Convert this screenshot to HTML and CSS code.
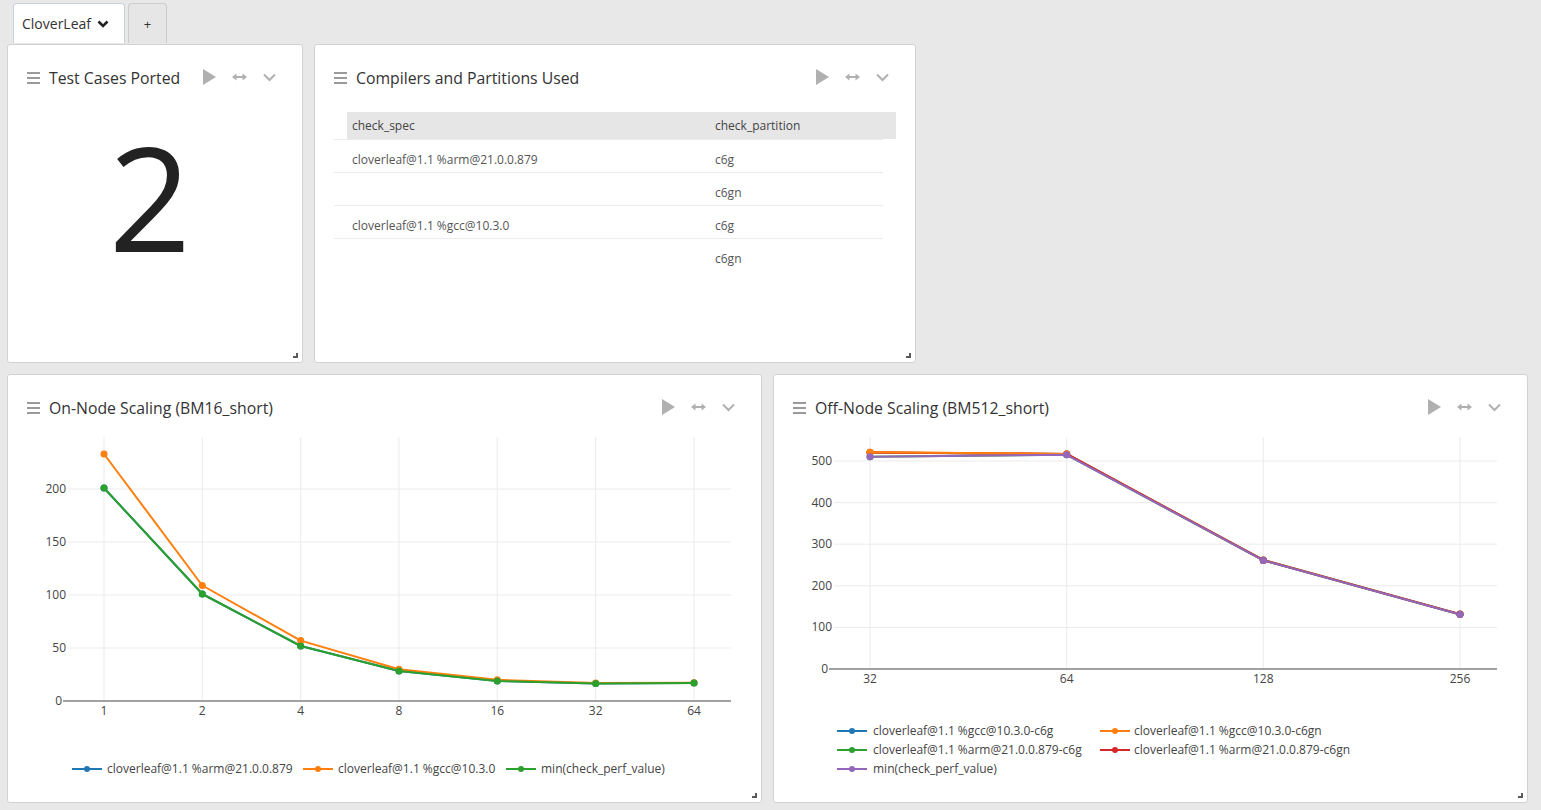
FILE: index.html
```html
<!DOCTYPE html>
<html lang="en">
<head>
<meta charset="utf-8">
<title>CloverLeaf</title>
<link rel="stylesheet" href="styles.css">
</head>
<body>
<nav class="tabs">
  <div class="tab tab-active">CloverLeaf
    <svg class="tab-chevron" width="12" height="8" viewBox="0 0 12 8"><polyline points="1.5,1.5 6,6 10.5,1.5" fill="none" stroke="#222" stroke-width="2.6"/></svg>
  </div>
  <div class="tab tab-add">+</div>
</nav>

<main class="board">
  <div class="row row-top">
    <section class="panel panel-count">
      <header class="panel-head">
        <svg class="menu-icon" width="13" height="12" viewBox="0 0 13 12"><rect y="0" width="13" height="2"/><rect y="5" width="13" height="2"/><rect y="10" width="13" height="2"/></svg>
        <h2 class="panel-title">Test Cases Ported</h2>
        <div class="panel-tools">
          <svg width="13" height="16" viewBox="0 0 13 16"><polygon points="0,0 13,8 0,16"/></svg>
          <svg width="15" height="8" viewBox="0 0 15 8"><polygon points="0,4 4.5,0.5 4.5,7.5"/><polygon points="15,4 10.5,0.5 10.5,7.5"/><rect x="3" y="3" width="9" height="2"/></svg>
          <svg width="13" height="9" viewBox="0 0 13 9"><polyline points="1,1.5 6.5,7 12,1.5" fill="none" stroke-width="2"/></svg>
        </div>
      </header>
      <div class="big-number">2</div>
    </section>

    <section class="panel panel-table">
      <header class="panel-head">
        <svg class="menu-icon" width="13" height="12" viewBox="0 0 13 12"><rect y="0" width="13" height="2"/><rect y="5" width="13" height="2"/><rect y="10" width="13" height="2"/></svg>
        <h2 class="panel-title">Compilers and Partitions Used</h2>
        <div class="panel-tools">
          <svg width="13" height="16" viewBox="0 0 13 16"><polygon points="0,0 13,8 0,16"/></svg>
          <svg width="15" height="8" viewBox="0 0 15 8"><polygon points="0,4 4.5,0.5 4.5,7.5"/><polygon points="15,4 10.5,0.5 10.5,7.5"/><rect x="3" y="3" width="9" height="2"/></svg>
          <svg width="13" height="9" viewBox="0 0 13 9"><polyline points="1,1.5 6.5,7 12,1.5" fill="none" stroke-width="2"/></svg>
        </div>
      </header>
      <div class="table">
        <div class="thead"><span>check_spec</span><span>check_partition</span></div>
        <div class="trow"><span>cloverleaf@1.1 %arm@21.0.0.879</span><span>c6g</span></div>
        <div class="trow"><span></span><span>c6gn</span></div>
        <div class="trow"><span>cloverleaf@1.1 %gcc@10.3.0</span><span>c6g</span></div>
        <div class="trow"><span></span><span>c6gn</span></div>
      </div>
    </section>
  </div>

  <div class="row row-bottom">
    <section class="panel panel-chart">
      <header class="panel-head">
        <svg class="menu-icon" width="13" height="12" viewBox="0 0 13 12"><rect y="0" width="13" height="2"/><rect y="5" width="13" height="2"/><rect y="10" width="13" height="2"/></svg>
        <h2 class="panel-title">On-Node Scaling (BM16_short)</h2>
        <div class="panel-tools">
          <svg width="13" height="16" viewBox="0 0 13 16"><polygon points="0,0 13,8 0,16"/></svg>
          <svg width="15" height="8" viewBox="0 0 15 8"><polygon points="0,4 4.5,0.5 4.5,7.5"/><polygon points="15,4 10.5,0.5 10.5,7.5"/><rect x="3" y="3" width="9" height="2"/></svg>
          <svg width="13" height="9" viewBox="0 0 13 9"><polyline points="1,1.5 6.5,7 12,1.5" fill="none" stroke-width="2"/></svg>
        </div>
      </header>
      <svg class="chart" width="753" height="371" viewBox="0 0 753 371">
        <g class="gridlines">
          <line x1="96" y1="7" x2="96" y2="271"/>
          <line x1="194.3" y1="7" x2="194.3" y2="271"/>
          <line x1="292.7" y1="7" x2="292.7" y2="271"/>
          <line x1="391" y1="7" x2="391" y2="271"/>
          <line x1="489.3" y1="7" x2="489.3" y2="271"/>
          <line x1="587.7" y1="7" x2="587.7" y2="271"/>
          <line x1="686" y1="7" x2="686" y2="271"/>
          <line x1="60" y1="59" x2="723" y2="59"/>
          <line x1="60" y1="112" x2="723" y2="112"/>
          <line x1="60" y1="165" x2="723" y2="165"/>
          <line x1="60" y1="218" x2="723" y2="218"/>
        </g>
        <line class="axis" x1="55" y1="271" x2="723" y2="271"/>
        <g class="ticks" text-anchor="end">
          <text x="58" y="63">200</text>
          <text x="58" y="116">150</text>
          <text x="58" y="169">100</text>
          <text x="58" y="222">50</text>
          <text x="54" y="275">0</text>
        </g>
        <g class="ticks" text-anchor="middle">
          <text x="96" y="285">1</text>
          <text x="194.3" y="285">2</text>
          <text x="292.7" y="285">4</text>
          <text x="391" y="285">8</text>
          <text x="489.3" y="285">16</text>
          <text x="587.7" y="285">32</text>
          <text x="686" y="285">64</text>
        </g>
        <g class="series" stroke="#1f77b4" fill="#1f77b4">
          <polyline points="96,58 194.3,164 292.7,216 391,241 489.3,251 587.7,253.5 686,253"/>
          <circle cx="96" cy="58" r="3.5"/><circle cx="194.3" cy="164" r="3.5"/><circle cx="292.7" cy="216" r="3.5"/><circle cx="391" cy="241" r="3.5"/><circle cx="489.3" cy="251" r="3.5"/><circle cx="587.7" cy="253.5" r="3.5"/><circle cx="686" cy="253" r="3.5"/>
        </g>
        <g class="series" stroke="#ff7f0e" fill="#ff7f0e">
          <polyline points="96,24 194.3,155.5 292.7,210.6 391,239.2 489.3,249.8 587.7,253 686,252.7"/>
          <circle cx="96" cy="24" r="3.5"/><circle cx="194.3" cy="155.5" r="3.5"/><circle cx="292.7" cy="210.6" r="3.5"/><circle cx="391" cy="239.2" r="3.5"/><circle cx="489.3" cy="249.8" r="3.5"/><circle cx="587.7" cy="253" r="3.5"/><circle cx="686" cy="252.7" r="3.5"/>
        </g>
        <g class="series" stroke="#2ca02c" fill="#2ca02c">
          <polyline points="96,58 194.3,164 292.7,216 391,241 489.3,251 587.7,253.5 686,253"/>
          <circle cx="96" cy="58" r="3.5"/><circle cx="194.3" cy="164" r="3.5"/><circle cx="292.7" cy="216" r="3.5"/><circle cx="391" cy="241" r="3.5"/><circle cx="489.3" cy="251" r="3.5"/><circle cx="587.7" cy="253.5" r="3.5"/><circle cx="686" cy="253" r="3.5"/>
        </g>
        <g class="legend">
          <g stroke="#1f77b4" fill="#1f77b4"><line x1="64" y1="339" x2="94" y2="339"/><circle cx="79" cy="339" r="3"/></g>
          <text x="99" y="343">cloverleaf@1.1 %arm@21.0.0.879</text>
          <g stroke="#ff7f0e" fill="#ff7f0e"><line x1="295" y1="339" x2="325" y2="339"/><circle cx="310" cy="339" r="3"/></g>
          <text x="330" y="343">cloverleaf@1.1 %gcc@10.3.0</text>
          <g stroke="#2ca02c" fill="#2ca02c"><line x1="498" y1="339" x2="528" y2="339"/><circle cx="513" cy="339" r="3"/></g>
          <text x="533" y="343">min(check_perf_value)</text>
        </g>
      </svg>
    </section>

    <section class="panel panel-chart">
      <header class="panel-head">
        <svg class="menu-icon" width="13" height="12" viewBox="0 0 13 12"><rect y="0" width="13" height="2"/><rect y="5" width="13" height="2"/><rect y="10" width="13" height="2"/></svg>
        <h2 class="panel-title">Off-Node Scaling (BM512_short)</h2>
        <div class="panel-tools">
          <svg width="13" height="16" viewBox="0 0 13 16"><polygon points="0,0 13,8 0,16"/></svg>
          <svg width="15" height="8" viewBox="0 0 15 8"><polygon points="0,4 4.5,0.5 4.5,7.5"/><polygon points="15,4 10.5,0.5 10.5,7.5"/><rect x="3" y="3" width="9" height="2"/></svg>
          <svg width="13" height="9" viewBox="0 0 13 9"><polyline points="1,1.5 6.5,7 12,1.5" fill="none" stroke-width="2"/></svg>
        </div>
      </header>
      <svg class="chart" width="753" height="371" viewBox="0 0 753 371">
        <g class="gridlines">
          <line x1="96" y1="7" x2="96" y2="239"/>
          <line x1="292.7" y1="7" x2="292.7" y2="239"/>
          <line x1="489.3" y1="7" x2="489.3" y2="239"/>
          <line x1="686" y1="7" x2="686" y2="239"/>
          <line x1="60" y1="31" x2="723" y2="31"/>
          <line x1="60" y1="72.6" x2="723" y2="72.6"/>
          <line x1="60" y1="114.2" x2="723" y2="114.2"/>
          <line x1="60" y1="155.8" x2="723" y2="155.8"/>
          <line x1="60" y1="197.4" x2="723" y2="197.4"/>
        </g>
        <line class="axis" x1="55" y1="239" x2="723" y2="239"/>
        <g class="ticks" text-anchor="end">
          <text x="58" y="35">500</text>
          <text x="58" y="76.6">400</text>
          <text x="58" y="118.2">300</text>
          <text x="58" y="159.8">200</text>
          <text x="58" y="201.4">100</text>
          <text x="54" y="243">0</text>
        </g>
        <g class="ticks" text-anchor="middle">
          <text x="96" y="253">32</text>
          <text x="292.7" y="253">64</text>
          <text x="489.3" y="253">128</text>
          <text x="686" y="253">256</text>
        </g>
        <g class="series" stroke="#1f77b4" fill="#1f77b4">
          <polyline points="96,22.6 292.7,24 489.3,130 686,184.1"/>
          <circle cx="96" cy="22.6" r="3.5"/><circle cx="292.7" cy="24" r="3.5"/><circle cx="489.3" cy="130" r="3.5"/><circle cx="686" cy="184.1" r="3.5"/>
        </g>
        <g class="series" stroke="#ff7f0e" fill="#ff7f0e">
          <polyline points="96,22.3 292.7,23.9 489.3,130 686,184.1"/>
          <circle cx="96" cy="22.3" r="3.5"/><circle cx="292.7" cy="23.9" r="3.5"/><circle cx="489.3" cy="130" r="3.5"/><circle cx="686" cy="184.1" r="3.5"/>
        </g>
        <g class="series" stroke="#2ca02c" fill="#2ca02c">
          <polyline points="96,26.8 292.7,24.8 489.3,130.4 686,184.5"/>
          <circle cx="96" cy="26.8" r="3.5"/><circle cx="292.7" cy="24.8" r="3.5"/><circle cx="489.3" cy="130.4" r="3.5"/><circle cx="686" cy="184.5" r="3.5"/>
        </g>
        <g class="series" stroke="#d62728" fill="#d62728">
          <polyline points="96,22.5 292.7,24 489.3,130.2 686,184.3"/>
          <circle cx="96" cy="22.5" r="3.5"/><circle cx="292.7" cy="24" r="3.5"/><circle cx="489.3" cy="130.2" r="3.5"/><circle cx="686" cy="184.3" r="3.5"/>
        </g>
        <g class="series" stroke="#ff7f0e" fill="#ff7f0e">
          <polyline points="96,22.3 292.7,23.9"/>
          <circle cx="96" cy="22.3" r="3.5"/><circle cx="292.7" cy="23.9" r="3.5"/>
        </g>
        <g class="series" stroke="#9467bd" fill="#9467bd">
          <polyline points="96,26.8 292.7,24.8 489.3,130.4 686,184.5"/>
          <circle cx="96" cy="26.8" r="3.5"/><circle cx="292.7" cy="24.8" r="3.5"/><circle cx="489.3" cy="130.4" r="3.5"/><circle cx="686" cy="184.5" r="3.5"/>
        </g>
        <g class="legend">
          <g stroke="#1f77b4" fill="#1f77b4"><line x1="63" y1="301" x2="93" y2="301"/><circle cx="78" cy="301" r="3"/></g>
          <text x="99" y="305">cloverleaf@1.1 %gcc@10.3.0-c6g</text>
          <g stroke="#ff7f0e" fill="#ff7f0e"><line x1="326" y1="301" x2="356" y2="301"/><circle cx="341" cy="301" r="3"/></g>
          <text x="360" y="305">cloverleaf@1.1 %gcc@10.3.0-c6gn</text>
          <g stroke="#2ca02c" fill="#2ca02c"><line x1="63" y1="320" x2="93" y2="320"/><circle cx="78" cy="320" r="3"/></g>
          <text x="99" y="324">cloverleaf@1.1 %arm@21.0.0.879-c6g</text>
          <g stroke="#d62728" fill="#d62728"><line x1="326" y1="320" x2="356" y2="320"/><circle cx="341" cy="320" r="3"/></g>
          <text x="360" y="324">cloverleaf@1.1 %arm@21.0.0.879-c6gn</text>
          <g stroke="#9467bd" fill="#9467bd"><line x1="63" y1="339" x2="93" y2="339"/><circle cx="78" cy="339" r="3"/></g>
          <text x="99" y="343">min(check_perf_value)</text>
        </g>
      </svg>
    </section>
  </div>
</main>
</body>
</html>
```

FILE: styles.css
```css
html, body {
  margin: 0;
  padding: 0;
}

body {
  width: 1541px;
  height: 810px;
  overflow: hidden;
  background: #e8e8e8;
  font-family: "Open Sans", "DejaVu Sans", sans-serif;
  color: #333;
}

/* ---------- tabs ---------- */
.tabs {
  display: flex;
  gap: 3px;
  padding: 3px 0 0 13px;
  height: 40px;
}

.tab {
  box-sizing: border-box;
  height: 40px;
  border: 1px solid #cfd2d8;
  border-bottom: none;
  border-radius: 4px 4px 0 0;
  display: flex;
  align-items: center;
  font-size: 14px;
  color: #333;
}

.tab-active {
  width: 112px;
  padding-left: 8px;
  background: #fff;
  border-color: #c9d0de;
}

.tab-chevron {
  margin-left: 6px;
}

.tab-add {
  width: 39px;
  justify-content: center;
  background: #e6e6e6;
  border-color: #cccccc;
  font-size: 13px;
}

/* ---------- board ---------- */
.board {
  display: flex;
  flex-direction: column;
  gap: 11px;
  padding: 1px 0 0 7px;
}

.row {
  display: flex;
  gap: 11px;
}

.row-top { height: 319px; }
.row-bottom { height: 429px; }

.panel {
  position: relative;
  box-sizing: border-box;
  background: #fff;
  border: 1px solid #d2d2d2;
  border-radius: 3px;
}

.panel::after {
  content: "";
  position: absolute;
  right: 4px;
  bottom: 4px;
  width: 5px;
  height: 5px;
  box-sizing: border-box;
  border-right: 2px solid #5a5a5a;
  border-bottom: 2px solid #5a5a5a;
}

.panel-count { width: 296px; }
.panel-table { width: 602px; }
.panel-chart { width: 755px; }

/* ---------- panel header ---------- */
.panel-head {
  display: flex;
  align-items: center;
  height: 22px;
  padding: 22px 26px 11px 19px;
}

.menu-icon {
  fill: #9a9a9a;
  flex: none;
}

.panel-title {
  margin: 0 0 0 9px;
  font-size: 15.8px;
  font-weight: 400;
  color: #333;
  white-space: nowrap;
}

.panel-tools {
  margin-left: auto;
  margin-top: -2px;
  display: flex;
  align-items: center;
  gap: 16px;
  fill: #b0b0b0;
  stroke: #b0b0b0;
}

.panel-tools svg { display: block; }
.panel-tools polygon, .panel-tools rect { stroke: none; }

/* ---------- big number ---------- */
.big-number {
  font-size: 144px;
  line-height: 1;
  text-align: center;
  padding: 24px 10px 0 0;
  color: #222;
}

/* ---------- table ---------- */
.table {
  margin: 12px 32px 0 19px;
  font-size: 12px;
  color: #555;
}

.thead {
  display: grid;
  grid-template-columns: 363px 1fr;
  align-items: center;
  height: 27px;
  margin: 0 -13px 0 13px;
  padding-left: 5px;
  background: #e6e6e6;
  color: #444;
}

.trow {
  display: grid;
  grid-template-columns: 363px 1fr;
  align-items: start;
  box-sizing: border-box;
  height: 33px;
  padding: 12px 0 0 18px;
  line-height: 16px;
  border-top: 1px solid #ececec;
}

/* ---------- charts ---------- */
.chart {
  display: block;
  font-family: "Open Sans", "DejaVu Sans", sans-serif;
}

.gridlines line {
  stroke: #ebebeb;
  stroke-width: 1;
}

.axis {
  stroke: #444;
  stroke-width: 1;
}

.ticks text {
  font-size: 12px;
  fill: #444;
}

.series polyline {
  fill: none;
  stroke-width: 2;
  stroke-linejoin: round;
}

.series circle { stroke: none; }

.legend line { stroke-width: 2; }
.legend circle { stroke: none; }

.legend text {
  font-size: 12px;
  fill: #444;
}
```
